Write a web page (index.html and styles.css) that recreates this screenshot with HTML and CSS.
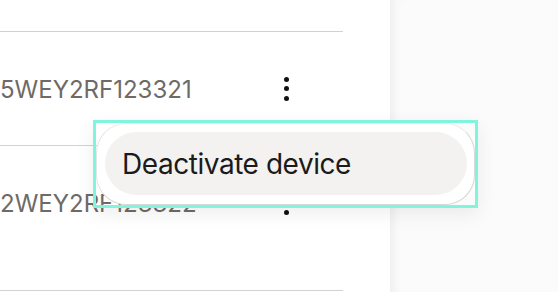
FILE: index.html
```html
<!DOCTYPE html>
<html lang="en">
<head>
<meta charset="utf-8">
<title>Devices</title>
<link rel="stylesheet" href="styles.css">
</head>
<body>
<div class="page">
  <div class="main">
    <ul class="list">
      <li class="row">
        <span class="serial">5WEY2RF123321</span>
        <button class="kebab" aria-label="More options"><span></span><span></span><span></span></button>
      </li>
      <li class="row row-last">
        <span class="serial">2WEY2RF123322</span>
        <button class="kebab" aria-label="More options"><span></span><span></span><span></span></button>
      </li>
    </ul>
    <div class="menu-focus">
      <div class="menu" role="menu">
        <div class="menu-item" role="menuitem">Deactivate device</div>
      </div>
    </div>
  </div>
  <div class="side"></div>
</div>
</body>
</html>
```

FILE: styles.css
```css
html, body {
  margin: 0;
  padding: 0;
  background: #ffffff;
}
body {
  width: 558px;
  height: 292px;
  overflow: hidden;
  font-family: Inter, "Noto Sans", "Liberation Sans", sans-serif;
}
.page {
  display: flex;
  height: 292px;
}
.main {
  position: relative;
  width: 390px;
  flex: none;
  background: #ffffff;
}
.side {
  flex: 1;
  background: #fbfbfb;
  box-shadow: inset 10px 0 12px -8px rgba(0, 0, 0, 0.07);
}
.list {
  list-style: none;
  margin: 0;
  padding: 31px 0 0 0;
  width: 343px;
}
.row {
  display: flex;
  align-items: center;
  height: 113px;
  border-top: 1.5px solid #d2d2d2;
}
.row-last {
  height: 113px;
  padding-bottom: 31px;
  border-bottom: 1.5px solid #d2d2d2;
}
.serial {
  width: 266px;
  font-size: 24px;
  color: #6f6a66;
  letter-spacing: 0;
  margin-top: 1px;
}
.kebab {
  width: 40px;
  height: 40px;
  padding: 0;
  border: 0;
  background: transparent;
  display: flex;
  flex-direction: column;
  align-items: center;
  justify-content: center;
  gap: 4.5px;
}
.kebab span {
  display: block;
  width: 5px;
  height: 5px;
  border-radius: 50%;
  background: #111111;
}
.menu-focus {
  position: absolute;
  left: 93px;
  top: 120px;
  border: 3px solid #7ff5de;
  box-shadow: 0 6px 18px rgba(0, 0, 0, 0.07);
}
.menu {
  width: 379px;
  box-sizing: border-box;
  padding: 8px 7px 9px 8px;
  background: #ffffff;
  border: 1px solid #d8d8d8;
  border-left-color: #e4e4e4;
  border-top-color: #ececec;
  border-radius: 30px;
}
.menu-item {
  height: 63px;
  display: flex;
  align-items: center;
  padding-left: 17px;
  border-radius: 32px;
  background: #f3f2f0;
  color: #1b1b1b;
  font-size: 28px;
  letter-spacing: -0.45px;
}
```
